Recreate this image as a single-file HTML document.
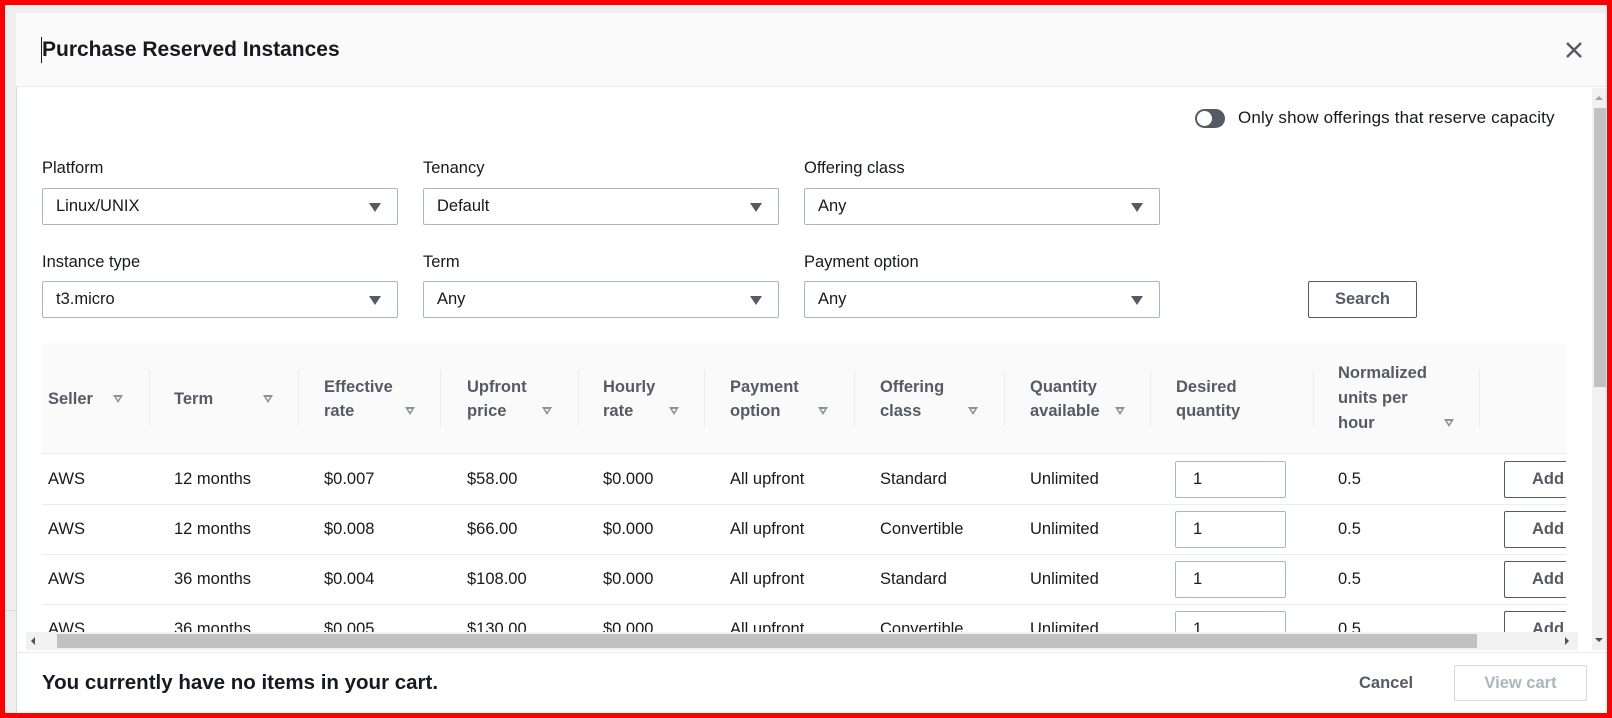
<!DOCTYPE html>
<html><head><meta charset="utf-8"><style>
*{box-sizing:border-box;margin:0;padding:0}
body{width:1612px;height:718px;overflow:hidden;background:#eef0f0;font-family:"Liberation Sans",Arial,sans-serif;color:#16191f;position:relative}
.a{position:absolute}
.frame{left:0;top:0;width:1612px;height:718px;border:5px solid #f00;z-index:50}
.modal{left:16px;top:13px;width:1596px;height:705px;background:#fff;border-left:1px solid #d5dbdb}
.hdr{left:16px;top:13px;width:1596px;height:74px;background:#fafafa;border-bottom:1px solid #eaeded}
.lbl{font-size:16.5px;color:#16191f}
.sel{height:37px;width:356px;border:1px solid #aab7b8;border-radius:2px;background:#fff;font-size:16.5px;padding:8px 13px;line-height:19px}
.sel:after{content:"";position:absolute;right:16px;top:14px;border-left:6px solid transparent;border-right:6px solid transparent;border-top:9px solid #545b64}
.th{font-size:16.5px;font-weight:bold;color:#545b64;line-height:24px}
.sep{width:1px;height:56px;top:370px;background:#eaeded}
.tri{width:0;height:0;border-left:5px solid transparent;border-right:5px solid transparent;border-top:8px solid #879596}
.tri:after{content:"";position:absolute;left:-2px;top:-6px;border-left:2px solid transparent;border-right:2px solid transparent;border-top:3px solid #fafafa}
.td{font-size:16.5px;color:#16191f}
.rs{left:42px;width:1524px;height:1px;background:#eaeded}
.inp{width:111px;height:37px;border:1px solid #aab7b8;border-radius:2px;font-size:16.5px;padding:8px 17px;line-height:19px;background:#fff}
.add{width:70px;height:37px;border:1px solid #545b64;border-right:none;border-radius:2px 0 0 2px;font-size:16.5px;font-weight:bold;color:#545b64;padding:8px 0 0 27px;line-height:19px;background:#fff;white-space:nowrap;overflow:hidden}
</style></head><body>
<div class="a frame"></div>
<div class="a modal"></div>
<div class="a hdr"></div>
<div class="a" style="left:5px;top:610px;width:11px;height:1px;background:#d5dbdb"></div>
<div class="a" style="left:41px;top:37px;width:1px;height:26px;background:#16191f"></div>
<div class="a" style="left:42px;top:37px;font-size:21px;font-weight:bold;line-height:26px">Purchase Reserved Instances</div>
<svg class="a" style="left:1565px;top:41px" width="18" height="18" viewBox="0 0 18 18"><path d="M2 2L16 16M16 2L2 16" stroke="#545b64" stroke-width="2.4"/></svg>

<div class="a" style="left:1592px;top:88px;width:15px;height:562px;background:#f1f1f1"></div>
<div class="a" style="left:1594px;top:108px;width:12px;height:279px;background:#c1c1c1"></div>
<div class="a" style="left:1595px;top:96px;border-left:4px solid transparent;border-right:4px solid transparent;border-bottom:4px solid #a3a3a3"></div>
<div class="a" style="left:1595px;top:638px;border-left:4px solid transparent;border-right:4px solid transparent;border-top:4px solid #505050"></div>

<div class="a" style="left:1195px;top:109px;width:30px;height:19px;border-radius:10px;background:#545b64"></div>
<div class="a" style="left:1197px;top:111px;width:15px;height:15px;border-radius:50%;background:#fff"></div>
<div class="a" style="left:1238px;top:108px;font-size:17px;letter-spacing:0.15px">Only show offerings that reserve capacity</div>

<div class="a lbl" style="left:42px;top:159px">Platform</div>
<div class="a lbl" style="left:423px;top:159px">Tenancy</div>
<div class="a lbl" style="left:804px;top:159px">Offering class</div>
<div class="a sel" style="left:42px;top:188px">Linux/UNIX</div>
<div class="a sel" style="left:423px;top:188px">Default</div>
<div class="a sel" style="left:804px;top:188px">Any</div>
<div class="a lbl" style="left:42px;top:253px">Instance type</div>
<div class="a lbl" style="left:423px;top:253px">Term</div>
<div class="a lbl" style="left:804px;top:253px">Payment option</div>
<div class="a sel" style="left:42px;top:281px">t3.micro</div>
<div class="a sel" style="left:423px;top:281px">Any</div>
<div class="a sel" style="left:804px;top:281px">Any</div>
<div class="a" style="left:1308px;top:281px;width:109px;height:37px;border:1px solid #545b64;border-radius:2px;font-size:16.5px;font-weight:bold;color:#545b64;text-align:center;line-height:35px">Search</div>

<div class="a" style="left:42px;top:343px;width:1524px;height:111px;background:#fafafa;border-bottom:1px solid #eaeded"></div>
<div class="a th" style="left:48px;top:387px">Seller</div>
<div class="a th" style="left:174px;top:387px">Term</div>
<div class="a th" style="left:324px;top:375px">Effective<br>rate</div>
<div class="a th" style="left:467px;top:375px">Upfront<br>price</div>
<div class="a th" style="left:603px;top:375px">Hourly<br>rate</div>
<div class="a th" style="left:730px;top:375px">Payment<br>option</div>
<div class="a th" style="left:880px;top:375px">Offering<br>class</div>
<div class="a th" style="left:1030px;top:375px">Quantity<br>available</div>
<div class="a th" style="left:1176px;top:375px">Desired<br>quantity</div>
<div class="a th" style="left:1338px;top:361px;line-height:25px">Normalized<br>units per<br>hour</div>
<div class="a tri" style="left:113px;top:395px"></div>
<div class="a tri" style="left:263px;top:395px"></div>
<div class="a tri" style="left:405px;top:407px"></div>
<div class="a tri" style="left:542px;top:407px"></div>
<div class="a tri" style="left:669px;top:407px"></div>
<div class="a tri" style="left:818px;top:407px"></div>
<div class="a tri" style="left:968px;top:407px"></div>
<div class="a tri" style="left:1115px;top:407px"></div>
<div class="a tri" style="left:1444px;top:419px"></div>
<div class="a sep" style="left:149px"></div><div class="a sep" style="left:298px"></div><div class="a sep" style="left:440px"></div><div class="a sep" style="left:578px"></div><div class="a sep" style="left:704px"></div><div class="a sep" style="left:854px"></div><div class="a sep" style="left:1004px"></div><div class="a sep" style="left:1150px"></div><div class="a sep" style="left:1313px"></div><div class="a sep" style="left:1479px"></div>

<div class="a" style="left:42px;top:455px;width:1524px;height:177px;overflow:hidden">
<div style="position:relative;left:-42px;top:-455px">
<div class="a rs" style="top:504px"></div><div class="a rs" style="top:554px"></div><div class="a rs" style="top:604px"></div>
<div class="a td" style="left:48px;top:470px">AWS</div><div class="a td" style="left:174px;top:470px">12 months</div><div class="a td" style="left:324px;top:470px">$0.007</div><div class="a td" style="left:467px;top:470px">$58.00</div><div class="a td" style="left:603px;top:470px">$0.000</div><div class="a td" style="left:730px;top:470px">All upfront</div><div class="a td" style="left:880px;top:470px">Standard</div><div class="a td" style="left:1030px;top:470px">Unlimited</div><div class="a inp" style="left:1175px;top:461px">1</div><div class="a td" style="left:1338px;top:470px">0.5</div><div class="a add" style="left:1504px;top:461px">Add</div>
<div class="a td" style="left:48px;top:520px">AWS</div><div class="a td" style="left:174px;top:520px">12 months</div><div class="a td" style="left:324px;top:520px">$0.008</div><div class="a td" style="left:467px;top:520px">$66.00</div><div class="a td" style="left:603px;top:520px">$0.000</div><div class="a td" style="left:730px;top:520px">All upfront</div><div class="a td" style="left:880px;top:520px">Convertible</div><div class="a td" style="left:1030px;top:520px">Unlimited</div><div class="a inp" style="left:1175px;top:511px">1</div><div class="a td" style="left:1338px;top:520px">0.5</div><div class="a add" style="left:1504px;top:511px">Add</div>
<div class="a td" style="left:48px;top:570px">AWS</div><div class="a td" style="left:174px;top:570px">36 months</div><div class="a td" style="left:324px;top:570px">$0.004</div><div class="a td" style="left:467px;top:570px">$108.00</div><div class="a td" style="left:603px;top:570px">$0.000</div><div class="a td" style="left:730px;top:570px">All upfront</div><div class="a td" style="left:880px;top:570px">Standard</div><div class="a td" style="left:1030px;top:570px">Unlimited</div><div class="a inp" style="left:1175px;top:561px">1</div><div class="a td" style="left:1338px;top:570px">0.5</div><div class="a add" style="left:1504px;top:561px">Add</div>
<div class="a td" style="left:48px;top:620px">AWS</div><div class="a td" style="left:174px;top:620px">36 months</div><div class="a td" style="left:324px;top:620px">$0.005</div><div class="a td" style="left:467px;top:620px">$130.00</div><div class="a td" style="left:603px;top:620px">$0.000</div><div class="a td" style="left:730px;top:620px">All upfront</div><div class="a td" style="left:880px;top:620px">Convertible</div><div class="a td" style="left:1030px;top:620px">Unlimited</div><div class="a inp" style="left:1175px;top:611px">1</div><div class="a td" style="left:1338px;top:620px">0.5</div><div class="a add" style="left:1504px;top:611px">Add</div>
</div></div>

<div class="a" style="left:26px;top:632px;width:1552px;height:18px;background:#f1f1f1"></div>
<div class="a" style="left:57px;top:634px;width:1420px;height:14px;background:#c1c1c1"></div>
<div class="a" style="left:31px;top:637px;border-top:4px solid transparent;border-bottom:4px solid transparent;border-right:4px solid #505050"></div>
<div class="a" style="left:1565px;top:637px;border-top:4px solid transparent;border-bottom:4px solid transparent;border-left:4px solid #505050"></div>

<div class="a" style="left:16px;top:652px;width:1591px;height:1px;background:#eaeded"></div>
<div class="a" style="left:42px;top:671px;font-size:20.5px;font-weight:bold;line-height:24px">You currently have no items in your cart.</div>
<div class="a" style="left:1359px;top:674px;font-size:16.5px;font-weight:bold;color:#545b64">Cancel</div>
<div class="a" style="left:1454px;top:665px;width:133px;height:36px;border:1px solid #d5dbdb;border-radius:2px;font-size:16.5px;font-weight:bold;color:#aab7b8;text-align:center;line-height:34px">View cart</div>
</body></html>
